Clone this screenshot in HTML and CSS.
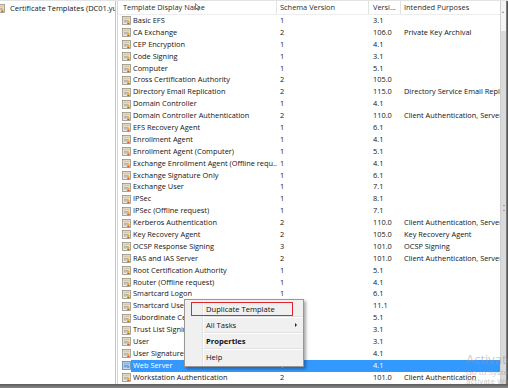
FILE: index.html
```html
<!DOCTYPE html>
<html lang="en">
<head>
  <meta charset="UTF-8" />
  <title>Certificate Templates</title>
  <link rel="stylesheet" href="styles.css">
</head>
<body>
  <svg class="sprite" aria-hidden="true">
    <symbol id="tpl" viewBox="0 0 10 10">
      <rect x="0.5" y="0.5" width="9" height="9" fill="#ece8e0" stroke="#8c8579" stroke-width="0.8"/>
      <rect x="1.6" y="1.6" width="6.8" height="2.2" fill="#d9c9a3"/>
      <path d="M2 5.2h5M2 6.6h3.4" stroke="#8a8175" stroke-width="0.7"/>
      <path d="M5.6 8.8l1.4-2.6 1.6 2.6z" fill="#c8503c"/>
      <circle cx="7" cy="6.4" r="1.5" fill="#e8b03a"/>
    </symbol>
    <symbol id="tpl-sel" viewBox="0 0 10 10">
      <rect x="0.5" y="0.5" width="9" height="9" fill="#bcd8f6" stroke="#4d7bb0" stroke-width="0.8"/>
      <rect x="1.6" y="1.6" width="6.8" height="2.2" fill="#8fb6e2"/>
      <path d="M2 5.2h5M2 6.6h3.4" stroke="#41699a" stroke-width="0.7"/>
      <circle cx="7" cy="6.4" r="1.5" fill="#6f9fd8"/>
    </symbol>
  </svg>

  <div class="window">
    <div class="main">
      <div class="tree">
        <div class="tree-item">
          <svg class="ico tree-ico"><use href="#tpl"/></svg>
          <span>Certificate Templates (DC01.yue</span>
        </div>
      </div>

      <div class="list">
        <div class="table">
          <div class="header">
            <div class="hcell">Template Display Name</div>
            <div class="hcell">Schema Version</div>
            <div class="hcell">Versi...</div>
            <div class="hcell">Intended Purposes</div>
          </div>
          <div class="rows">
            <div class="row"><div class="icell"><svg class="ico"><use href="#tpl"/></svg></div><div class="cell">Basic EFS</div><div class="cell">1</div><div class="cell ver">3.1</div><div class="cell"></div></div>
            <div class="row"><div class="icell"><svg class="ico"><use href="#tpl"/></svg></div><div class="cell">CA Exchange</div><div class="cell">2</div><div class="cell ver">106.0</div><div class="cell">Private Key Archival</div></div>
            <div class="row"><div class="icell"><svg class="ico"><use href="#tpl"/></svg></div><div class="cell">CEP Encryption</div><div class="cell">1</div><div class="cell ver">4.1</div><div class="cell"></div></div>
            <div class="row"><div class="icell"><svg class="ico"><use href="#tpl"/></svg></div><div class="cell">Code Signing</div><div class="cell">1</div><div class="cell ver">3.1</div><div class="cell"></div></div>
            <div class="row"><div class="icell"><svg class="ico"><use href="#tpl"/></svg></div><div class="cell">Computer</div><div class="cell">1</div><div class="cell ver">5.1</div><div class="cell"></div></div>
            <div class="row"><div class="icell"><svg class="ico"><use href="#tpl"/></svg></div><div class="cell">Cross Certification Authority</div><div class="cell">2</div><div class="cell ver">105.0</div><div class="cell"></div></div>
            <div class="row"><div class="icell"><svg class="ico"><use href="#tpl"/></svg></div><div class="cell">Directory Email Replication</div><div class="cell">2</div><div class="cell ver">115.0</div><div class="cell">Directory Service Email Replic</div></div>
            <div class="row"><div class="icell"><svg class="ico"><use href="#tpl"/></svg></div><div class="cell">Domain Controller</div><div class="cell">1</div><div class="cell ver">4.1</div><div class="cell"></div></div>
            <div class="row"><div class="icell"><svg class="ico"><use href="#tpl"/></svg></div><div class="cell">Domain Controller Authentication</div><div class="cell">2</div><div class="cell ver">110.0</div><div class="cell">Client Authentication, Server</div></div>
            <div class="row"><div class="icell"><svg class="ico"><use href="#tpl"/></svg></div><div class="cell">EFS Recovery Agent</div><div class="cell">1</div><div class="cell ver">6.1</div><div class="cell"></div></div>
            <div class="row"><div class="icell"><svg class="ico"><use href="#tpl"/></svg></div><div class="cell">Enrollment Agent</div><div class="cell">1</div><div class="cell ver">4.1</div><div class="cell"></div></div>
            <div class="row"><div class="icell"><svg class="ico"><use href="#tpl"/></svg></div><div class="cell">Enrollment Agent (Computer)</div><div class="cell">1</div><div class="cell ver">5.1</div><div class="cell"></div></div>
            <div class="row"><div class="icell"><svg class="ico"><use href="#tpl"/></svg></div><div class="cell">Exchange Enrollment Agent (Offline requ...</div><div class="cell">1</div><div class="cell ver">4.1</div><div class="cell"></div></div>
            <div class="row"><div class="icell"><svg class="ico"><use href="#tpl"/></svg></div><div class="cell">Exchange Signature Only</div><div class="cell">1</div><div class="cell ver">6.1</div><div class="cell"></div></div>
            <div class="row"><div class="icell"><svg class="ico"><use href="#tpl"/></svg></div><div class="cell">Exchange User</div><div class="cell">1</div><div class="cell ver">7.1</div><div class="cell"></div></div>
            <div class="row"><div class="icell"><svg class="ico"><use href="#tpl"/></svg></div><div class="cell">IPSec</div><div class="cell">1</div><div class="cell ver">8.1</div><div class="cell"></div></div>
            <div class="row"><div class="icell"><svg class="ico"><use href="#tpl"/></svg></div><div class="cell">IPSec (Offline request)</div><div class="cell">1</div><div class="cell ver">7.1</div><div class="cell"></div></div>
            <div class="row"><div class="icell"><svg class="ico"><use href="#tpl"/></svg></div><div class="cell">Kerberos Authentication</div><div class="cell">2</div><div class="cell ver">110.0</div><div class="cell">Client Authentication, Server</div></div>
            <div class="row"><div class="icell"><svg class="ico"><use href="#tpl"/></svg></div><div class="cell">Key Recovery Agent</div><div class="cell">2</div><div class="cell ver">105.0</div><div class="cell">Key Recovery Agent</div></div>
            <div class="row"><div class="icell"><svg class="ico"><use href="#tpl"/></svg></div><div class="cell">OCSP Response Signing</div><div class="cell">3</div><div class="cell ver">101.0</div><div class="cell">OCSP Signing</div></div>
            <div class="row"><div class="icell"><svg class="ico"><use href="#tpl"/></svg></div><div class="cell">RAS and IAS Server</div><div class="cell">2</div><div class="cell ver">101.0</div><div class="cell">Client Authentication, Server</div></div>
            <div class="row"><div class="icell"><svg class="ico"><use href="#tpl"/></svg></div><div class="cell">Root Certification Authority</div><div class="cell">1</div><div class="cell ver">5.1</div><div class="cell"></div></div>
            <div class="row"><div class="icell"><svg class="ico"><use href="#tpl"/></svg></div><div class="cell">Router (Offline request)</div><div class="cell">1</div><div class="cell ver">4.1</div><div class="cell"></div></div>
            <div class="row"><div class="icell"><svg class="ico"><use href="#tpl"/></svg></div><div class="cell">Smartcard Logon</div><div class="cell">1</div><div class="cell ver">6.1</div><div class="cell"></div></div>
            <div class="row"><div class="icell"><svg class="ico"><use href="#tpl"/></svg></div><div class="cell">Smartcard User</div><div class="cell">1</div><div class="cell ver">11.1</div><div class="cell"></div></div>
            <div class="row"><div class="icell"><svg class="ico"><use href="#tpl"/></svg></div><div class="cell">Subordinate Certification Authority</div><div class="cell">1</div><div class="cell ver">5.1</div><div class="cell"></div></div>
            <div class="row"><div class="icell"><svg class="ico"><use href="#tpl"/></svg></div><div class="cell">Trust List Signing</div><div class="cell">1</div><div class="cell ver">3.1</div><div class="cell"></div></div>
            <div class="row"><div class="icell"><svg class="ico"><use href="#tpl"/></svg></div><div class="cell">User</div><div class="cell">1</div><div class="cell ver">3.1</div><div class="cell"></div></div>
            <div class="row"><div class="icell"><svg class="ico"><use href="#tpl"/></svg></div><div class="cell">User Signature Only</div><div class="cell">1</div><div class="cell ver">4.1</div><div class="cell"></div></div>
            <div class="row selected"><div class="icell"><svg class="ico"><use href="#tpl-sel"/></svg></div><div class="cell">Web Server</div><div class="cell">1</div><div class="cell ver">4.1</div><div class="cell"></div></div>
            <div class="row"><div class="icell"><svg class="ico"><use href="#tpl"/></svg></div><div class="cell">Workstation Authentication</div><div class="cell">2</div><div class="cell ver">101.0</div><div class="cell">Client Authentication</div></div>
          </div>
        </div>
        <div class="scrollbar">
          <div class="arrow-up"></div>
          <div class="thumb"><div class="grip"></div></div>
        </div>
      </div>
      <div class="frame-right"></div>

      <div class="menu">
        <div class="menu-item">Duplicate Template</div>
        <div class="menu-sep"></div>
        <div class="menu-item">All Tasks <span class="submenu"></span></div>
        <div class="menu-sep"></div>
        <div class="menu-item bold">Properties</div>
        <div class="menu-sep"></div>
        <div class="menu-item">Help</div>
        <div class="callout"></div>
      </div>

      <svg class="cursor" viewBox="0 0 6 9"><path d="M0.5 0.5v7l1.8-1.6 1.2 2.6 1-0.5-1.2-2.5h2.3z" fill="#fff" stroke="#000" stroke-width="0.6"/></svg>

      <div class="watermark">
        <div class="wm-title">Activate Windows</div>
        <div class="wm-sub">Go to System in Control Panel to</div>
        <div class="wm-sub">activate Windows.</div>
      </div>
    </div>
    <div class="frame-bottom"></div>
  </div>
</body>
</html>
```

FILE: styles.css
```css
body {
  margin: 0;
  background: #ffffff;
  font-family: "Open Sans", "Noto Sans", Arial, sans-serif;
  font-size: 7.4px;
  color: #141414;
  overflow: hidden;
}
.sprite {
  position: absolute;
  width: 0;
  height: 0;
}
.window {
  width: 508px;
  height: 388px;
  display: flex;
  flex-direction: column;
}
.main {
  position: relative;
  flex: 1;
  display: flex;
  border-top: 1px solid #e3e3e3;
  overflow: hidden;
}
.tree {
  width: 115px;
  flex-shrink: 0;
  border-right: 1px solid #c4c4c4;
  overflow: hidden;
}
.tree-item {
  display: flex;
  align-items: center;
  height: 14px;
  white-space: nowrap;
  margin-left: -4px;
}
.tree-item .ico {
  flex-shrink: 0;
}
.tree-item span {
  margin-left: 5px;
  font-size: 7.5px;
}
.ico {
  width: 9px;
  height: 9px;
  display: block;
}
.list {
  flex: 1;
  display: flex;
  margin-left: 1px;
  border-left: 1px solid #d6d6d6;
}
.table {
  width: 382px;
}
.header {
  display: grid;
  grid-template-columns: 159px 92px 32px 99px;
  height: 13px;
  border-bottom: 1px solid #ededed;
  color: #2b2b2b;
}
.hcell {
  padding-left: 3px;
  line-height: 13px;
  border-right: 1px solid #e2e2e2;
  white-space: nowrap;
  overflow: hidden;
}
.hcell:first-child {
  padding-left: 5px;
}
.hcell:nth-child(3) {
  padding-left: 4px;
}
.hcell:last-child {
  border-right: none;
}
.row {
  display: grid;
  grid-template-columns: 13px 146px 92px 32px 99px;
  height: 11.9px;
}
.icell {
  padding-left: 4px;
  display: flex;
  align-items: center;
}
.cell {
  padding-left: 3px;
  line-height: 11.9px;
  white-space: nowrap;
  overflow: hidden;
}
.cell:nth-child(2) {
  padding-left: 2px;
}
.cell.ver {
  padding-left: 4px;
}
.row.selected .cell {
  background: #3399ff;
  color: #ffffff;
}
.scrollbar {
  width: 5px;
  border-left: 1px solid #cfcfcf;
  background: #f4f4f4;
  display: flex;
  flex-direction: column;
}
.arrow-up {
  height: 30px;
  position: relative;
}
.arrow-up::after {
  content: "";
  position: absolute;
  left: 1px;
  top: 10px;
  border-left: 1.5px solid transparent;
  border-right: 1.5px solid transparent;
  border-bottom: 2px solid #8a8a8a;
}
.thumb {
  flex: 1;
  background: #dadada;
  display: flex;
  align-items: center;
  justify-content: center;
}
.grip {
  width: 2px;
  height: 4px;
  border-top: 1px solid #9a9a9a;
  border-bottom: 1px solid #9a9a9a;
}
.frame-right {
  width: 3px;
  background: linear-gradient(to right, #8c8c8c, #444444);
}
.frame-bottom {
  height: 4px;
  background: linear-gradient(to bottom, #5a5a5a, #8a8a8a);
}
.menu {
  position: absolute;
  left: 184px;
  top: 298px;
  width: 118px;
  padding: 2px 0;
  background: linear-gradient(to right, #f0f0f0 17px, #e2e3e3 17px, #e2e3e3 18px, #ffffff 18px, #ffffff 19px, #f0f0f0 19px);
  border: 1px solid #979797;
  box-shadow: 2px 2px 3px rgba(0, 0, 0, 0.35);
  font-size: 7.6px;
  color: #111111;
}
.menu-item {
  height: 14px;
  line-height: 14px;
  padding-left: 21px;
  position: relative;
}
.menu-item.bold {
  font-weight: bold;
}
.menu-sep {
  height: 2px;
  margin-left: 19px;
  box-sizing: border-box;
  background: linear-gradient(#e0e0e0 1px, #ffffff 1px);
}
.submenu {
  position: absolute;
  right: 6px;
  top: 5px;
  border-top: 2px solid transparent;
  border-bottom: 2px solid transparent;
  border-left: 2.5px solid #222222;
}
.callout {
  position: absolute;
  left: 6px;
  top: 2px;
  width: 100px;
  height: 12px;
  border: 1.5px solid #e0262d;
}
.cursor {
  position: absolute;
  left: 195px;
  top: 2px;
  width: 5px;
  height: 8px;
}
.watermark {
  position: absolute;
  left: 466px;
  top: 350px;
  color: rgba(150, 150, 150, 0.55);
  white-space: nowrap;
  pointer-events: none;
}
.wm-title {
  font-size: 13px;
  line-height: 16px;
}
.wm-sub {
  font-size: 8px;
  line-height: 9px;
}
```
